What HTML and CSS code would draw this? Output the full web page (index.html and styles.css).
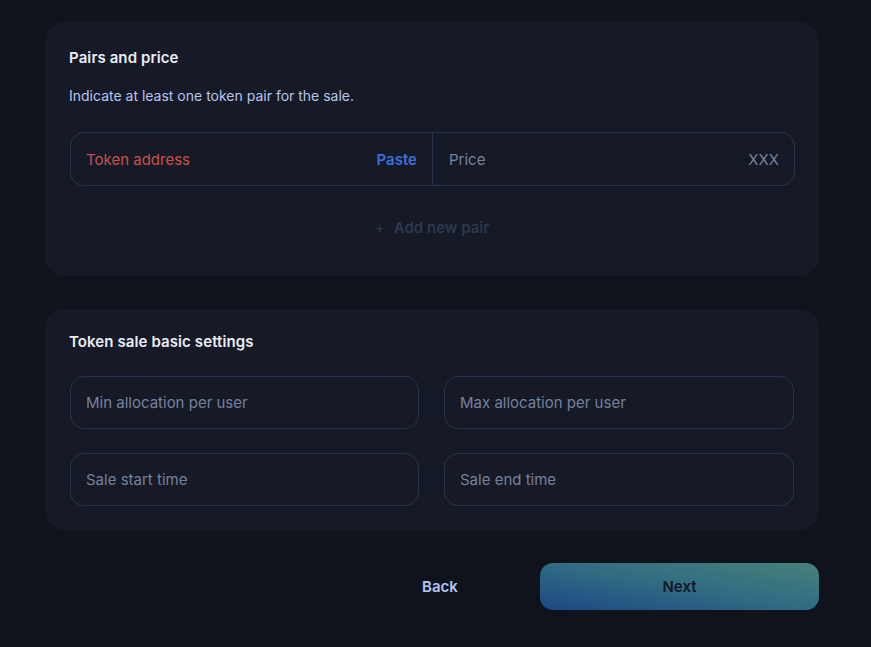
FILE: index.html
```html
<!DOCTYPE html>
<html lang="en">
<head>
<meta charset="utf-8">
<link rel="stylesheet" href="styles.css">
</head>
<body>
<main class="page">
  <section class="card card-pairs">
    <h2 class="card-title">Pairs and price</h2>
    <p class="card-sub">Indicate at least one token pair for the sale.</p>
    <div class="pair-field">
      <div class="pair-half">
        <span class="ph ph-error">Token address</span>
        <span class="paste">Paste</span>
      </div>
      <div class="pair-half pair-right">
        <span class="ph">Price</span>
        <span class="ph">XXX</span>
      </div>
    </div>
    <div class="add-pair"><span class="plus">+</span>Add new pair</div>
  </section>

  <section class="card card-settings">
    <h2 class="card-title">Token sale basic settings</h2>
    <div class="grid">
      <div class="field"><span class="ph">Min allocation per user</span></div>
      <div class="field"><span class="ph">Max allocation per user</span></div>
      <div class="field"><span class="ph">Sale start time</span></div>
      <div class="field"><span class="ph">Sale end time</span></div>
    </div>
  </section>

  <footer class="actions">
    <button class="btn-back">Back</button>
    <button class="btn-next">Next</button>
  </footer>
</main>
</body>
</html>
```

FILE: styles.css
```css
* { box-sizing: border-box; }
html, body { margin: 0; padding: 0; }
body {
  background: #0f131b;
  font-family: "Inter", "Lato", sans-serif;
  width: 871px;
  height: 647px;
  overflow: hidden;
}
.page {
  width: 774px;
  margin-left: 45px;
  padding-top: 22px;
}
.card {
  background: #151a26;
  border-radius: 20px;
  padding: 27px 24px 0 24px;
}
.card-pairs { height: 254px; }
.card-settings { height: 221px; margin-top: 33px; padding-top: 24px; }
.card-title {
  margin: 0;
  font-size: 15px;
  line-height: 18px;
  font-weight: 600;
  color: #e8edf7;
  letter-spacing: 0.1px;
}
.card-sub {
  margin: 21px 0 0 0;
  font-size: 14px;
  line-height: 16px;
  color: #b6c4ec;
}
.pair-field {
  margin-top: 28px;
  margin-left: 1px;
  height: 54px;
  border: 1px solid #26344c;
  border-radius: 14px;
  display: flex;
}
.pair-half {
  flex: 0 0 362px;
  display: flex;
  align-items: center;
  justify-content: space-between;
  padding: 0 15px 0 15px;
  border-right: 1px solid #26344c;
}
.pair-right {
  flex: 1;
  border-right: none;
  padding: 0 15px 0 16px;
}
.ph {
  font-size: 15px;
  font-weight: 400;
  color: #74819f;
}
.ph-error { color: #c8514f; }
.paste {
  font-size: 15px;
  font-weight: 600;
  color: #3b6fd9;
}
.add-pair {
  margin-top: 33px;
  text-align: center;
  font-size: 15px;
  font-weight: 600;
  color: #2b3950;
  line-height: 18px;
}
.plus {
  font-weight: 400;
  margin-right: 9px;
}
.grid {
  margin-top: 25px;
  margin-left: 1px;
  display: grid;
  grid-template-columns: 349px 350px;
  column-gap: 25px;
  row-gap: 24px;
}
.field {
  height: 53px;
  border: 1px solid #26344c;
  border-radius: 14px;
  display: flex;
  align-items: center;
  padding: 0 15px;
}
.actions {
  display: flex;
  justify-content: flex-end;
  margin-top: 33px;
}
button {
  font-family: inherit;
  border: none;
  cursor: pointer;
}
.btn-back {
  width: 200px;
  height: 47px;
  background: transparent;
  color: #b3c5f3;
  font-size: 15px;
  font-weight: 600;
}
.btn-next {
  width: 279px;
  height: 47px;
  border-radius: 13px;
  background: linear-gradient(to top right, #1d4785 0%, #306c82 50%, #46817a 100%);
  color: #121824;
  font-size: 15px;
  font-weight: 600;
}
```
